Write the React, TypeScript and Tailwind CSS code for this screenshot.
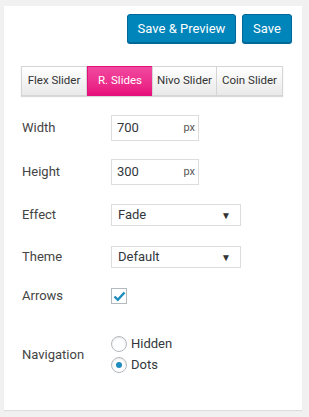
import { FC } from "react";

const tabs = ["Flex Slider", "R. Slides", "Nivo Slider", "Coin Slider"];
const tabWidths = ["w-[66px]", "w-[66px]", "w-[65px]", "w-[67px]"];

const Label: FC<{ text: string }> = ({ text }) => (
  <div className="w-[89px] shrink-0 text-[13px] text-[#444]">{text}</div>
);

const PxInput: FC<{ value: string }> = ({ value }) => (
  <div className="w-[88px] h-[26px] border border-[#ddd] bg-white flex items-center justify-between pl-[5px] pr-[3px]">
    <span className="text-[13px] text-[#32373c]">{value}</span>
    <span className="text-[11px] text-[#555]">px</span>
  </div>
);

const Select: FC<{ value: string }> = ({ value }) => (
  <div className="w-[130px] h-[22px] border border-[#ddd] bg-white flex items-center justify-between pl-[6px] pr-[9px]">
    <span className="text-[13px] text-[#32373c]">{value}</span>
    <span className="text-[10px] text-[#333]">▼</span>
  </div>
);

const Radio: FC<{ label: string; checked?: boolean }> = ({ label, checked }) => (
  <div className="flex items-center gap-[4px] h-[16px]">
    <div className="w-[16px] h-[16px] rounded-full border border-[#b4b9be] bg-white flex items-center justify-center shadow-[inset_0_1px_2px_rgba(0,0,0,0.1)]">
      {checked && <div className="w-[6px] h-[6px] rounded-full bg-[#1e8cbe]" />}
    </div>
    <span className="text-[13px] text-[#32373c]">{label}</span>
  </div>
);

export default function App() {
  return (
    <div
      className="w-[309px] h-[417px] bg-[#f1f1f1] pt-[6px] pl-[4px]"
      style={{ fontFamily: "Roboto, 'Liberation Sans', sans-serif" }}
    >
      <div className="w-[298px] h-[404px] bg-white shadow-[0_1px_1px_rgba(0,0,0,0.08)] flex flex-col">
        <div className="flex justify-end gap-[6px] pt-[8px] pr-[10px]">
          <button className="h-[29px] w-[109px] rounded-[3px] bg-[#0085ba] border border-[#006799] shadow-[0_1px_0_#006799] text-white text-[13px]">
            Save &amp; Preview
          </button>
          <button className="h-[29px] w-[50px] rounded-[3px] bg-[#0085ba] border border-[#006799] shadow-[0_1px_0_#006799] text-white text-[13px]">
            Save
          </button>
        </div>

        <div className="flex ml-[17px] mt-[23px] h-[30px] shadow-[0_1px_1px_rgba(0,0,0,0.15)] w-fit">
          {tabs.map((t, i) =>
            i === 1 ? (
              <div
                key={t}
                className={`${tabWidths[i]} h-[30px] flex items-center justify-center text-[11.5px] text-white bg-gradient-to-b from-[#f1479f] to-[#e80b7d] border border-[#e0127c]`}
              >
                {t}
              </div>
            ) : (
              <div
                key={t}
                className={`${tabWidths[i]} h-[30px] flex items-center justify-center text-[11.5px] text-[#333] bg-gradient-to-b from-white to-[#e9e9e9] border border-[#d5d5d5] -ml-px first:ml-0`}
              >
                {t}
              </div>
            )
          )}
        </div>

        <div className="flex flex-col pl-[18px] mt-[19px]">
          <div className="flex items-center h-[26px]">
            <Label text="Width" />
            <PxInput value="700" />
          </div>
          <div className="flex items-center h-[26px] mt-[18px]">
            <Label text="Height" />
            <PxInput value="300" />
          </div>
          <div className="flex items-center h-[22px] mt-[19px]">
            <Label text="Effect" />
            <Select value="Fade" />
          </div>
          <div className="flex items-center h-[22px] mt-[20px]">
            <Label text="Theme" />
            <Select value="Default" />
          </div>
          <div className="flex items-center h-[16px] mt-[20px]">
            <Label text="Arrows" />
            <div className="w-[16px] h-[16px] border border-[#b4b9be] bg-white flex items-center justify-center">
              <svg width="13" height="11" viewBox="0 0 13 11">
                <path d="M1.5 5.5 L4.8 8.8 L11.5 1.5" fill="none" stroke="#1e8cbe" strokeWidth="2.4" />
              </svg>
            </div>
          </div>
          <div className="flex items-center mt-[32px]">
            <Label text="Navigation" />
            <div className="flex flex-col gap-[5px]">
              <Radio label="Hidden" />
              <Radio label="Dots" checked />
            </div>
          </div>
        </div>
      </div>
    </div>
  );
}
